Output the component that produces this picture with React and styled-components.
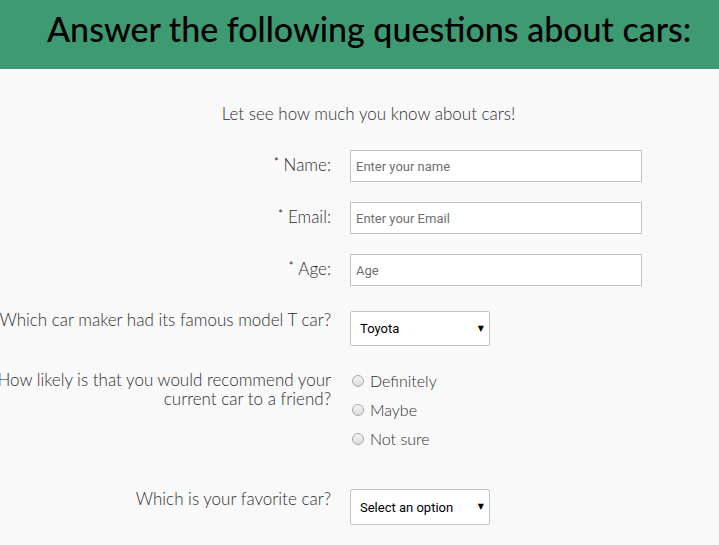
import React from "react";
import styled, { createGlobalStyle } from "styled-components";

const Global = createGlobalStyle`
  html, body { margin: 0; padding: 0; background: #f9f9f9; overflow: hidden; }
  body { font-family: "Lato", "Open Sans", sans-serif; color: #333; }
  * { box-sizing: border-box; }
`;

const Header = styled.header`
  background: #3d9a72;
  height: 69px;
  padding: 9px 0 0 47px;
`;

const Title = styled.h1`
  margin: 0;
  font-size: 34px;
  font-weight: 500;
  color: #000;
  line-height: 40px;
  white-space: nowrap;
`;

const Main = styled.main`
  padding-top: 35px;
`;

const Intro = styled.p`
  margin: 0 0 26px 0;
  text-align: center;
  font-size: 17px;
  font-weight: 300;
  line-height: 20px;
  padding-left: 18px;
  color: #2e2e2e;
`;

const Row = styled.div`
  display: grid;
  grid-template-columns: 350px 292px;
  column-gap: 19px;
  margin-left: -19px;
  margin-bottom: ${(p) => p.$gap || 20}px;
  align-items: start;
`;

const Label = styled.label`
  text-align: right;
  font-size: 17px;
  font-weight: 300;
  line-height: 19px;
  margin-top: ${(p) => p.$top || 0}px;
  color: #2e2e2e;
`;

const Star = styled.span`
  font-size: 11px;
  font-weight: 400;
  vertical-align: 5px;
  margin-right: 5px;
`;

const Input = styled.input`
  width: 292px;
  height: 32px;
  border: 1px solid #c4c4c4;
  background: #fff;
  padding: 0 5px;
  font-family: "Roboto", "Liberation Sans", sans-serif;
  font-size: 13px;
  color: #333;
  outline: none;
  &::placeholder { color: #6f6f6f; }
`;

const SelectBox = styled.div`
  position: relative;
  width: 140px;
`;

const Select = styled.select`
  appearance: none;
  -webkit-appearance: none;
  width: 140px;
  height: ${(p) => p.$h || 35}px;
  border: 1px solid #c4c4c4;
  border-radius: 2px;
  background: #fff;
  padding: 0 20px 0 9px;
  font-family: "Roboto", "Liberation Sans", sans-serif;
  font-size: 13px;
  color: #000;
  outline: none;
`;

const Arrow = styled.span`
  position: absolute;
  right: 6px;
  top: 50%;
  transform: translateY(-55%);
  font-size: 8px;
  color: #000;
  pointer-events: none;
  font-family: "DejaVu Sans", sans-serif;
`;

const Radios = styled.div`
  display: flex;
  flex-direction: column;
  gap: 9px;
  padding-top: 1px;
`;

const Option = styled.label`
  display: flex;
  align-items: center;
  gap: 6px;
  font-size: 16px;
  font-weight: 300;
  line-height: 20px;
  color: #2e2e2e;
`;

const Radio = styled.input.attrs({ type: "radio" })`
  appearance: none;
  -webkit-appearance: none;
  margin: 0 0 0 2px;
  width: 12px;
  height: 12px;
  border-radius: 50%;
  border: 1px solid #a9a9a9;
  background: linear-gradient(#f4f4f4, #dcdcdc);
`;

export default function App() {
  return (
    <>
      <Global />
      <Header>
        <Title>Answer the following questions about cars:</Title>
      </Header>
      <Main>
        <Intro>Let see how much you know about cars!</Intro>
        <Row>
          <Label $top={2}><Star>*</Star>Name:</Label>
          <Input placeholder="Enter your name" />
        </Row>
        <Row>
          <Label $top={2}><Star>*</Star>Email:</Label>
          <Input placeholder="Enter your Email" />
        </Row>
        <Row $gap={25}>
          <Label $top={2}><Star>*</Star>Age:</Label>
          <Input placeholder="Age" />
        </Row>
        <Row $gap={24}>
          <Label $top={-1}>Which car maker had its famous model T car?</Label>
          <SelectBox>
            <Select defaultValue="toyota">
              <option value="toyota">Toyota</option>
              <option value="ford">Ford</option>
              <option value="honda">Honda</option>
            </Select>
            <Arrow>▼</Arrow>
          </SelectBox>
        </Row>
        <Row $gap={40}>
          <Label $top={0}>How likely is that you would recommend your current car to a friend?</Label>
          <Radios>
            <Option><Radio name="rec" />Definitely</Option>
            <Option><Radio name="rec" />Maybe</Option>
            <Option><Radio name="rec" />Not sure</Option>
          </Radios>
        </Row>
        <Row>
          <Label $top={0}>Which is your favorite car?</Label>
          <SelectBox>
            <Select $h={36} defaultValue="">
              <option value="" disabled>Select an option</option>
              <option value="a">Car A</option>
            </Select>
            <Arrow>▼</Arrow>
          </SelectBox>
        </Row>
      </Main>
    </>
  );
}
